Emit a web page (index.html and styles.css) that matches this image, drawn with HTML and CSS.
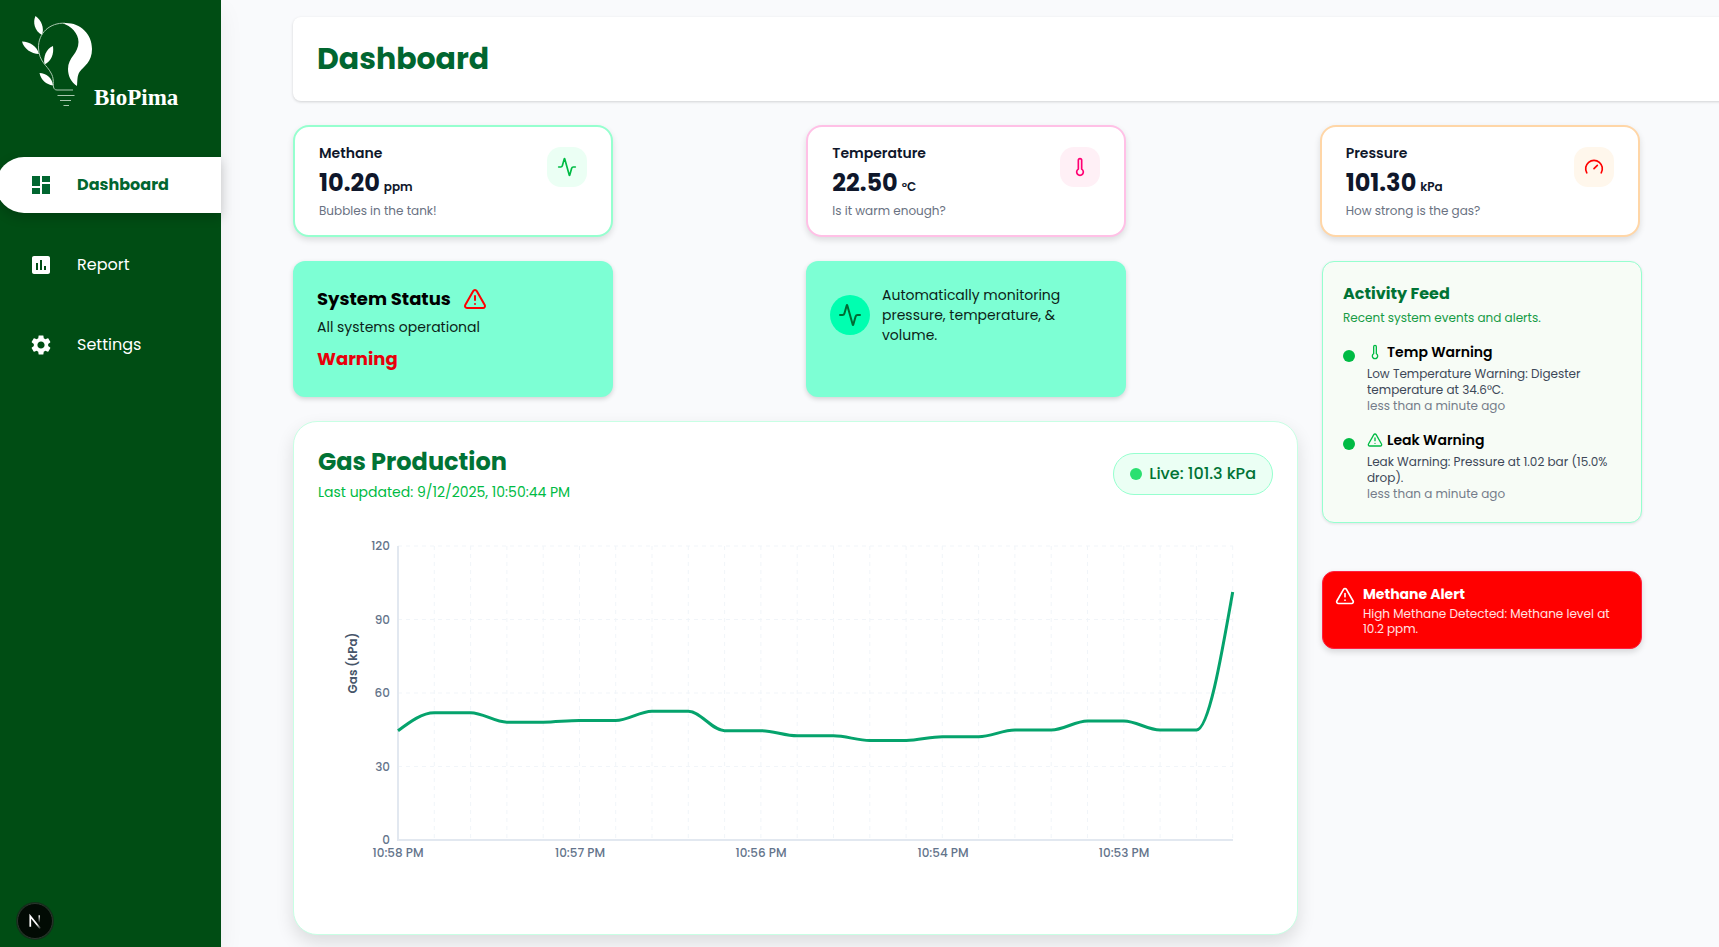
FILE: index.html
```html
<!DOCTYPE html>
<html lang="en">
<head>
<meta charset="utf-8">
<meta name="viewport" content="width=device-width, initial-scale=1">
<title>BioPima Dashboard</title>
<link rel="stylesheet" href="styles.css">
</head>
<body>
<svg width="0" height="0" class="sprite" aria-hidden="true">
  <symbol id="activity" viewBox="0 0 24 24"><path d="M22 12h-2.48a2 2 0 0 0-1.93 1.46l-2.35 8.36a.25.25 0 0 1-.48 0L9.24 2.18a.25.25 0 0 0-.48 0l-2.35 8.36A2 2 0 0 1 4.49 12H2"/></symbol>
  <symbol id="thermometer" viewBox="0 0 24 24"><path d="M14 4v10.54a4 4 0 1 1-4 0V4a2 2 0 0 1 4 0Z"/></symbol>
  <symbol id="gauge" viewBox="0 0 24 24"><path d="m12 14 4-4"/><path d="M3.34 19a10 10 0 1 1 17.32 0"/></symbol>
  <symbol id="alert" viewBox="0 0 24 24"><path d="m21.73 18-8-14a2 2 0 0 0-3.48 0l-8 14A2 2 0 0 0 4 21h16a2 2 0 0 0 1.73-3"/><path d="M12 9v4"/><path d="M12 17h.01"/></symbol>
</svg>
<div class="app">
  <aside class="sidebar">
    <a class="brand" href="#">
      <svg class="brand-mark" viewBox="20 14 74 94" aria-hidden="true">
        <g fill="#fff">
          <path d="M35.500 16C32.500 22 34.500 31 42 35C44.500 28 41.500 20 35.500 16Z"/>
          <path d="M22 41.500C24 49 31 53.500 39 54C37 46 30 42 22 41.500Z"/>
          <path d="M53 46C46 49 43 57 44.500 64.500C51.500 61 54 54 53 46Z"/>
          <path d="M39.500 73C41 80 46 84.500 53 85.500C52.500 78 46 73 39.500 73Z"/>
          <path d="M62.500 23.200C79 21.500 92 33 92 49C92 62 84 66 79.500 72C77 76 77.500 81 77 86C71 82 68 76 68 69C68 57 78.500 54 78.500 42C78.500 33 71 26 62.500 23.200Z"/>
        </g>
        <g class="brand-lines">
          <path d="M65 23.200C50 22.500 38 33 38.500 48C39 62 47 65 51 73C54 78 53 82 53.500 87C54 89 55 90 57 90H73"/>
          <path d="M57.500 95.500H74.500M60 100.500H71M63.500 105.500H69"/>
        </g>
      </svg>
      <span class="brand-name">BioPima</span>
    </a>
    <nav class="nav">
      <a class="nav-item active" href="#">
        <svg viewBox="0 0 24 24"><path d="M3 13h8V3H3v10zm0 8h8v-6H3v6zm10 0h8V11h-8v10zm0-18v6h8V3h-8z"/></svg>
        <span>Dashboard</span>
      </a>
      <a class="nav-item" href="#">
        <svg viewBox="0 0 24 24"><path d="M19 3H5c-1.100 0-2 .9-2 2v14c0 1.100.9 2 2 2h14c1.100 0 2-.9 2-2V5c0-1.100-.9-2-2-2zM9 17H7v-7h2v7zm4 0h-2V7h2v10zm4 0h-2v-4h2v4z"/></svg>
        <span>Report</span>
      </a>
      <a class="nav-item" href="#">
        <svg viewBox="0 0 24 24"><path d="M19.140 12.940c.04-.3.06-.61.06-.94 0-.32-.02-.64-.07-.94l2.030-1.580c.18-.14.23-.41.12-.61l-1.920-3.320c-.12-.22-.37-.29-.59-.22l-2.390.96c-.5-.38-1.030-.7-1.620-.94l-.36-2.540c-.04-.24-.24-.41-.48-.41h-3.840c-.24 0-.43.17-.47.41l-.36 2.540c-.59.24-1.130.57-1.620.94l-2.390-.96c-.22-.08-.47 0-.59.22L2.740 8.870c-.12.21-.08.47.12.61l2.030 1.580c-.05.3-.09.63-.09.94s.02.64.07.94l-2.030 1.580c-.18.14-.23.41-.12.61l1.920 3.320c.12.22.37.29.59.22l2.390-.96c.5.38 1.030.7 1.620.94l.36 2.540c.05.24.24.41.48.41h3.840c.24 0 .44-.17.47-.41l.36-2.540c.59-.24 1.130-.56 1.620-.94l2.390.96c.22.08.47 0 .59-.22l1.920-3.320c.12-.22.07-.47-.12-.61l-2.010-1.580zM12 15.600c-1.980 0-3.600-1.620-3.600-3.600s1.620-3.600 3.600-3.600 3.600 1.620 3.600 3.600-1.620 3.600-3.600 3.600z"/></svg>
        <span>Settings</span>
      </a>
    </nav>
  </aside>

  <main class="main">
    <header class="page-header"><h1>Dashboard</h1></header>

    <section class="stats">
      <article class="stat mint">
        <div>
          <h2>Methane</h2>
          <p class="value">10.20 <span>ppm</span></p>
          <p class="hint">Bubbles in the tank!</p>
        </div>
        <div class="stat-icon"><svg class="icon"><use href="#activity"/></svg></div>
      </article>
      <article class="stat pink">
        <div>
          <h2>Temperature</h2>
          <p class="value">22.50 <span>°C</span></p>
          <p class="hint">Is it warm enough?</p>
        </div>
        <div class="stat-icon"><svg class="icon"><use href="#thermometer"/></svg></div>
      </article>
      <article class="stat orange">
        <div>
          <h2>Pressure</h2>
          <p class="value">101.30 <span>kPa</span></p>
          <p class="hint">How strong is the gas?</p>
        </div>
        <div class="stat-icon"><svg class="icon"><use href="#gauge"/></svg></div>
      </article>
    </section>

    <div class="content">
      <div class="content-main">
        <div class="status-row">
          <section class="status-card">
            <h2>System Status <svg class="icon icon-lg"><use href="#alert"/></svg></h2>
            <p>All systems operational</p>
            <strong>Warning</strong>
          </section>
          <section class="status-card">
            <div class="monitor">
              <div class="monitor-icon"><svg class="icon icon-lg"><use href="#activity"/></svg></div>
              <p>Automatically monitoring pressure, temperature, &amp; volume.</p>
            </div>
          </section>
        </div>

        <section class="gas">
          <div class="gas-head">
            <div>
              <h2>Gas Production</h2>
              <p>Last updated: 9/12/2025, 10:50:44 PM</p>
            </div>
            <div class="live"><span class="live-dot"></span>Live: 101.3 kPa</div>
          </div>
          <svg class="chart" viewBox="0 0 955 384" role="img" aria-label="Gas pressure over time">
            <path class="grid" d="M80 20H915M80 93.500H915M80 167H915M80 240.500H915"/>
            <path class="grid" d="M116.300 20V314M152.600 20V314M188.900 20V314M225.200 20V314M261.500 20V314M297.700 20V314M334 20V314M370.300 20V314M406.600 20V314M442.900 20V314M479.200 20V314M515.500 20V314M551.800 20V314M588.100 20V314M624.300 20V314M660.600 20V314M696.900 20V314M733.200 20V314M769.500 20V314M805.800 20V314M842.100 20V314M878.400 20V314M914.700 20V314"/>
            <path class="axis" d="M80 20V314H915"/>
            <path class="series" d="M80 204.700C92.100 195.700 104.200 186.700 116.300 186.700H152.600C164.700 186.700 176.800 196.200 188.900 196.200H225.200C237.300 196.200 249.400 194.500 261.500 194.500H297.700C309.800 194.500 321.900 185.300 334 185.300H370.300C382.400 185.300 394.500 204.700 406.600 204.700H442.900C455 204.700 467.100 209.800 479.200 209.800H515.500C527.600 209.800 539.700 214.400 551.800 214.400H588.100C600.200 214.400 612.300 210.700 624.300 210.700H660.600C672.700 210.700 684.800 204 696.900 204H733.200C745.300 204 757.400 195 769.500 195H805.800C817.900 195 830 204 842.100 204H878.400C890.500 204 902.600 135 914.700 66"/>
            <g class="tick end">
              <text x="72" y="24">120</text><text x="72" y="98">90</text><text x="72" y="171">60</text><text x="72" y="245">30</text><text x="72" y="318">0</text>
            </g>
            <g class="tick mid">
              <text x="80" y="331">10:58 PM</text><text x="262" y="331">10:57 PM</text><text x="443" y="331">10:56 PM</text><text x="625" y="331">10:54 PM</text><text x="806" y="331">10:53 PM</text>
            </g>
            <text class="axis-title" transform="translate(39 137) rotate(-90)">Gas (kPa)</text>
          </svg>
        </section>
      </div>

      <aside class="side">
        <section class="feed">
          <h2>Activity Feed</h2>
          <p class="feed-sub">Recent system events and alerts.</p>
          <ul>
            <li>
              <span class="dot"></span>
              <div>
                <h3><svg class="icon"><use href="#thermometer"/></svg>Temp Warning</h3>
                <p>Low Temperature Warning: Digester temperature at 34.6°C.</p>
                <time>less than a minute ago</time>
              </div>
            </li>
            <li>
              <span class="dot"></span>
              <div>
                <h3><svg class="icon"><use href="#alert"/></svg>Leak Warning</h3>
                <p>Leak Warning: Pressure at 1.02 bar (15.0% drop).</p>
                <time>less than a minute ago</time>
              </div>
            </li>
          </ul>
        </section>
        <section class="alert" role="alert">
          <svg class="icon"><use href="#alert"/></svg>
          <div>
            <h3>Methane Alert</h3>
            <p>High Methane Detected: Methane level at 10.2 ppm.</p>
          </div>
        </section>
      </aside>
    </div>
  </main>
</div>
<button class="dev-button" type="button" aria-label="Open developer tools">
  <svg viewBox="0 0 36 36" fill="none">
    <defs>
      <linearGradient id="fade-a" x1="13" y1="13" x2="25" y2="26" gradientUnits="userSpaceOnUse"><stop offset=".6" stop-color="#fff"/><stop offset="1" stop-color="#fff" stop-opacity="0"/></linearGradient>
      <linearGradient id="fade-b" x1="22" y1="12" x2="22" y2="20" gradientUnits="userSpaceOnUse"><stop stop-color="#fff"/><stop offset="1" stop-color="#fff" stop-opacity="0"/></linearGradient>
    </defs>
    <path d="M13 24V13L23.500 26" stroke="url(#fade-a)" stroke-width="1.800"/>
    <path d="M22.500 12V20" stroke="url(#fade-b)" stroke-width="1.600"/>
  </svg>
</button>
</body>
</html>
```
FILE: styles.css
```css
* { box-sizing: border-box; }

body {
  margin: 0;
  overflow-x: hidden;
  background: #f9fafc;
  color: #000;
  font-family: Poppins, Inter, "Noto Sans", sans-serif;
  font-size: 14px;
  line-height: 20px;
}

h1, h2, h3, p, ul { margin: 0; padding: 0; }
ul { list-style: none; }
a { color: inherit; text-decoration: none; }
.sprite { position: absolute; }

.icon {
  flex: none;
  width: 20px;
  height: 20px;
  fill: none;
  stroke: currentColor;
  stroke-width: 2;
  stroke-linecap: round;
  stroke-linejoin: round;
}
.icon-lg { width: 24px; height: 24px; }

.app { display: flex; min-height: 100vh; }

/* Sidebar */
.sidebar {
  flex: none;
  width: 221px;
  background: #004d14;
  color: #fff;
  box-shadow: 0 10px 24px rgba(0, 0, 0, .06);
}
.brand { display: flex; align-items: flex-end; padding: 14px 20px 0; }
.brand-mark { flex: none; width: 74px; height: 94px; }
.brand-lines { fill: none; stroke: #a9c8af; stroke-width: 1; }
.brand-name { margin-bottom: -3px; font: bold 23px/26px "Liberation Serif", serif; }
.nav { display: flex; flex-direction: column; gap: 24px; margin: 49px 0 0 -4px; }
.nav-item {
  display: flex;
  align-items: center;
  gap: 24px;
  height: 56px;
  padding-left: 33px;
  border-radius: 28px 0 0 28px;
  font-size: 16px;
}
.nav-item svg { width: 24px; height: 24px; fill: currentColor; }
.nav-item.active {
  background: #fff;
  color: #016630;
  font-weight: 700;
  box-shadow: 0 4px 12px rgba(0, 0, 0, .2);
}

/* Page */
.main {
  flex: 1;
  display: flex;
  flex-direction: column;
  gap: 24px;
  min-width: 0;
  margin-right: -90px;
  padding: 17px 0 12px 72px;
}
.page-header {
  padding: 24px;
  border-radius: 8px;
  background: #fff;
  box-shadow: 0 1px 3px rgba(0, 0, 0, .16);
}
.page-header h1 { color: #016630; font-size: 30px; line-height: 36px; }

/* Stat cards */
.stats { display: grid; grid-template-columns: repeat(3, 1fr); gap: 24px; }
.stat {
  display: flex;
  justify-content: space-between;
  width: 320px;
  padding: 16px 24px;
  border: 2px solid;
  border-radius: 16px;
  background: #fff;
  box-shadow: 0 3px 6px rgba(0, 0, 0, .12);
}
.stat h2 { color: #0f172b; font-size: 14px; font-weight: 600; }
.stat .value {
  display: flex;
  align-items: baseline;
  gap: 4px;
  margin: 4px 0;
  color: #0f172b;
  font-size: 24px;
  font-weight: 700;
  line-height: 32px;
}
.stat .value span { font-size: 12px; font-weight: 600; line-height: 16px; }
.stat .hint { color: #6a7282; font-size: 12px; line-height: 16px; }
.stat-icon {
  display: grid;
  place-items: center;
  width: 40px;
  height: 40px;
  margin-top: 4px;
  border-radius: 14px;
}
.mint { border-color: #96ffcf; }
.mint .stat-icon { background: #ebfff4; color: #00bb44; }
.pink { border-color: #ffc0e6; }
.pink .stat-icon { background: #fff0f6; color: #ff0073; }
.orange { border-color: #ffd6a7; }
.orange .stat-icon { background: #fff7ec; color: #ff0000; }

/* Content columns */
.content { display: grid; grid-template-columns: minmax(0, 1fr) 487px; gap: 24px; }
.content-main { display: flex; flex-direction: column; gap: 24px; }
.status-row { display: grid; grid-template-columns: 1fr 1fr; gap: 21px; }
.status-card {
  width: 320px;
  padding: 24px;
  border-radius: 12px;
  background: #7dffd4;
  box-shadow: 0 2px 5px rgba(0, 0, 0, .16);
}
.status-card h2 { display: flex; align-items: center; gap: 12px; font-size: 18px; line-height: 28px; }
.status-card h2 .icon { color: #ff0000; }
.status-card p { color: #0c1f18; }
.status-card h2 + p { margin-top: 4px; }
.status-card strong { display: block; margin-top: 8px; color: #e7000b; font-size: 18px; line-height: 28px; }
.monitor { display: flex; align-items: center; gap: 12px; }
.monitor-icon {
  display: grid;
  place-items: center;
  flex: none;
  width: 40px;
  height: 40px;
  border-radius: 50%;
  background: #00ffb0;
  color: #006b34;
}

/* Gas chart */
.gas {
  padding: 24px;
  border: 1px solid #c8ffe4;
  border-radius: 24px;
  background: #fff;
  box-shadow: 0 8px 18px rgba(0, 0, 0, .12);
}
.gas-head { display: flex; align-items: center; justify-content: space-between; margin-bottom: 24px; }
.gas-head h2 { color: #017335; font-size: 24px; line-height: 32px; }
.gas-head p { margin-top: 4px; color: #00bb44; }
.live {
  display: flex;
  align-items: center;
  gap: 7px;
  padding: 8px 16px;
  border: 1px solid #96ffcf;
  border-radius: 21px;
  background: #ebfff4;
  color: #017335;
  font-size: 16px;
  font-weight: 500;
  line-height: 24px;
}
.live-dot { width: 12px; height: 12px; border-radius: 50%; background: #2be070; }
.chart { display: block; width: 100%; height: auto; }
.grid { stroke: #f1f5f9; stroke-dasharray: 4 4; }
.axis { fill: none; stroke: #e2e8f0; stroke-width: 2; }
.series { fill: none; stroke: #05a36c; stroke-width: 3; }
.tick { fill: #64748b; font-size: 12px; font-weight: 500; }
.end { text-anchor: end; }
.mid { text-anchor: middle; }
.axis-title { fill: #475569; font-size: 12px; font-weight: 600; text-anchor: middle; }

/* Activity and alerts */
.side { display: flex; flex-direction: column; gap: 48px; width: 320px; }
.feed {
  padding: 20px;
  border: 1px solid #96ffcf;
  border-radius: 12px;
  background: #f7fcf6;
  box-shadow: 0 1px 3px rgba(0, 0, 0, .1);
}
.feed h2 { color: #017335; font-size: 16px; line-height: 24px; }
.feed-sub { margin: 4px 0 16px; color: #169b45; font-size: 12px; line-height: 16px; }
.feed ul { display: flex; flex-direction: column; gap: 16px; }
.feed li { display: flex; gap: 12px; }
.dot { flex: none; width: 12px; height: 12px; margin-top: 8px; border-radius: 50%; background: #00bb44; }
.feed h3 { display: flex; align-items: center; gap: 4px; font-size: 14px; font-weight: 600; }
.feed h3 .icon { width: 16px; height: 16px; color: #00bb44; }
.feed li p { margin-top: 4px; color: #3d4858; font-size: 12px; line-height: 16px; }
.feed time { display: block; color: #757c8a; font-size: 12px; line-height: 16px; }
.alert {
  display: flex;
  gap: 8px;
  padding: 12px;
  border: 1px solid #ff2040;
  border-radius: 12px;
  background: #ff0000;
  color: #fff;
  box-shadow: 0 3px 6px rgba(0, 0, 0, .14);
}
.alert .icon { margin-top: 2px; }
.alert h3 { font-size: 14px; font-weight: 700; }
.alert p { margin-top: 2px; color: #ffe2e2; font-size: 12px; line-height: 15px; }

.dev-button {
  position: fixed;
  bottom: 8px;
  left: 17px;
  width: 36px;
  height: 36px;
  padding: 0;
  border: 1px solid #2b352d;
  border-radius: 50%;
  background: #020b04;
  box-shadow: 0 0 0 1px #12301a;
}
.dev-button svg { display: block; width: 100%; height: 100%; }
```
